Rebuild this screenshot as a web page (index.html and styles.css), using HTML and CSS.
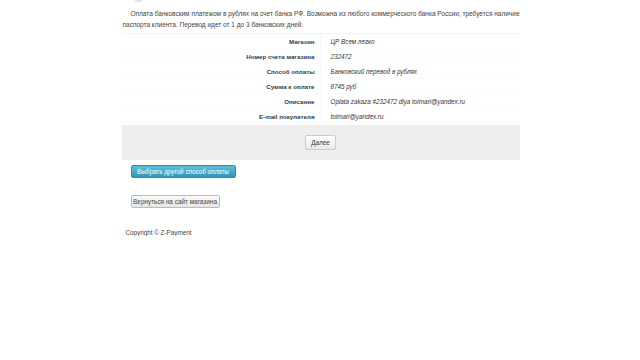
FILE: index.html
```html
<!DOCTYPE html>
<html lang="ru">
<head>
<meta charset="utf-8">
<title>Z-Payment</title>
<link rel="stylesheet" href="styles.css">
</head>
<body>
<div class="page">
  <div class="top-mark"></div>
  <p class="intro">Оплата банковским платежом в рублях на счет банка РФ. Возможна из любого коммерческого банка России, требуется наличие паспорта клиента. Перевод идет от 1 до 3 банковских дней.</p>
  <div class="details">
    <div class="row"><div class="label">Магазин</div><div class="value">ЦР Всем легко</div></div>
    <div class="row"><div class="label">Номер счета магазина</div><div class="value">232472</div></div>
    <div class="row"><div class="label">Способ оплаты</div><div class="value">Банковский перевод в рублях</div></div>
    <div class="row"><div class="label">Сумма к оплате</div><div class="value">8745 руб</div></div>
    <div class="row"><div class="label">Описание</div><div class="value">Oplata zakaza #232472 dlya tolmari@yandex.ru</div></div>
    <div class="row"><div class="label">E-mail покупателя</div><div class="value">tolmari@yandex.ru</div></div>
  </div>
  <div class="actions">
    <button class="btn">Далее</button>
  </div>
  <div class="links">
    <button class="btn btn-info">Выбрать другой способ оплаты</button>
    <button class="btn btn-back">Вернуться на сайт магазина</button>
  </div>
  <div class="copyright">Copyright © Z-Payment</div>
</div>
</body>
</html>
```
FILE: styles.css
```css
html, body {
  margin: 0;
  padding: 0;
  background: #ffffff;
}
body {
  font-family: "Liberation Sans", Arial, sans-serif;
  font-size: 6px;
  color: #333333;
}
.page {
  width: 398px;
  margin: 0 auto;
  padding-left: 1px;
}
.top-mark {
  width: 7px;
  height: 2px;
  margin-left: 13px;
  background: #dfe8e4;
}
.intro {
  margin: 6px 0 0 1px;
  font-size: 6.5px;
  line-height: 11px;
  text-align: justify;
  text-indent: 8px;
  color: #444444;
}
.details {
  margin-top: 3px;
  border-top: 1px solid #f3f3f3;
}
.row {
  display: grid;
  grid-template-columns: 199px 1fr;
  height: 15px;
  align-items: center;
  border-bottom: 1px solid #fbfbfb;
  box-sizing: border-box;
}
.label {
  text-align: right;
  font-weight: bold;
  font-size: 6.2px;
  padding-right: 5px;
  color: #3a3a3a;
  height: 100%;
  display: flex;
  align-items: center;
  justify-content: flex-end;
  border-right: 1px solid #f7f7f7;
}
.value {
  font-style: italic;
  font-size: 6.3px;
  padding-left: 10px;
  color: #333333;
}
.actions {
  margin-top: 1px;
  height: 35px;
  background: #eeeeee;
  display: flex;
  align-items: center;
  justify-content: center;
}
.btn {
  font-family: "Liberation Sans", Arial, sans-serif;
  font-size: 6.3px;
  line-height: 11px;
  padding: 1px 5px;
  border: 1px solid #cccccc;
  border-radius: 2px;
  background: linear-gradient(#ffffff, #e9e9e9);
  color: #333333;
  cursor: pointer;
}
.links {
  display: flex;
  flex-direction: column;
  align-items: flex-start;
  gap: 17px;
  padding-left: 9px;
  margin-top: 5px;
}
.btn-info {
  background: linear-gradient(#5bc0de, #2f96b4);
  border-color: #2a8fae;
  color: #ffffff;
  width: 105px;
  height: 13px;
  padding: 0;
}
.btn-back {
  width: 89px;
  height: 13px;
  padding: 0;
  background: linear-gradient(#fafafa, #e6e6e6);
  border-color: #bbbbbb;
  font-size: 6.4px;
  color: #444444;
}
.copyright {
  margin-top: 21px;
  padding-left: 4px;
  font-size: 6.3px;
  color: #444444;
}
```
